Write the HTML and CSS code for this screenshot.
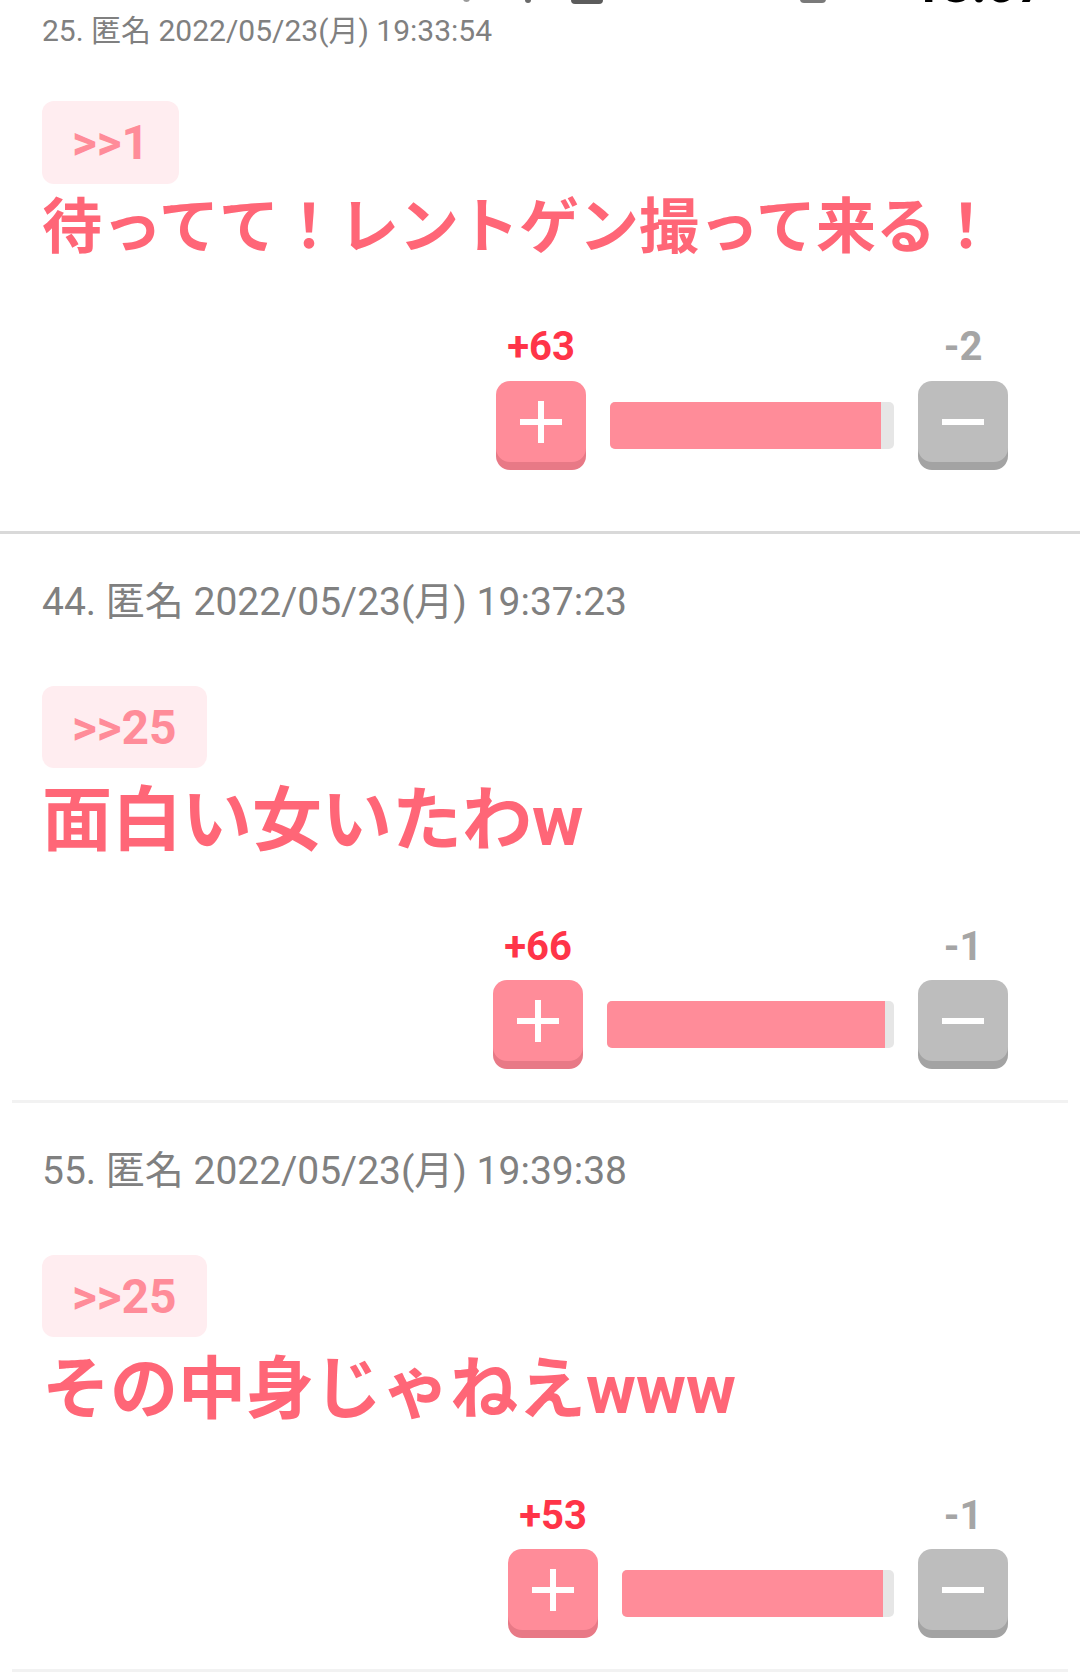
FILE: index.html
```html
<!DOCTYPE html>
<html lang="ja">

<head>
    <meta charset="UTF-8">
    <meta name="viewport" content="width=device-width, initial-scale=1.0">
    <title>レス一覧</title>
    <link rel="stylesheet" href="styles.css">
</head>

<body>
    <div class="statusbar">
        <span class="sb-mark sb-light"></span>
        <span class="sb-mark sb-small"></span>
        <span class="sb-mark sb-block"></span>
        <span class="sb-mark sb-mid"></span>
        <span class="sb-time">13:07</span>
    </div>

    <div class="post post-first">
        <div class="post-head">25. 匿名 2022/05/23(月) 19:33:54</div>
        <div class="anchor">&gt;&gt;1</div>
        <div class="post-body">待ってて！レントゲン撮って来る！</div>
        <div class="votes">
            <div class="vote-col">
                <div class="count count-plus">+63</div>
                <div class="vote-btn btn-plus">
                    <svg width="42" height="42" viewBox="0 0 42 42"><rect x="0" y="18" width="42" height="6" fill="#fff"/><rect x="18" y="0" width="6" height="42" fill="#fff"/></svg>
                </div>
            </div>
            <div class="bar" style="width: 284px;"><div class="bar-fill" style="width: 95.4%;"></div></div>
            <div class="vote-col">
                <div class="count count-minus">-2</div>
                <div class="vote-btn btn-minus">
                    <svg width="42" height="6" viewBox="0 0 42 6"><rect x="0" y="0" width="42" height="6" fill="#fff"/></svg>
                </div>
            </div>
        </div>
    </div>
    <div class="divider"></div>

    <div class="post">
        <div class="post-head">44. 匿名 2022/05/23(月) 19:37:23</div>
        <div class="anchor">&gt;&gt;25</div>
        <div class="post-body post-body-lg">面白い女いたわw</div>
        <div class="votes">
            <div class="vote-col">
                <div class="count count-plus">+66</div>
                <div class="vote-btn btn-plus">
                    <svg width="42" height="42" viewBox="0 0 42 42"><rect x="0" y="18" width="42" height="6" fill="#fff"/><rect x="18" y="0" width="6" height="42" fill="#fff"/></svg>
                </div>
            </div>
            <div class="bar" style="width: 287px;"><div class="bar-fill" style="width: 96.8%;"></div></div>
            <div class="vote-col">
                <div class="count count-minus">-1</div>
                <div class="vote-btn btn-minus">
                    <svg width="42" height="6" viewBox="0 0 42 6"><rect x="0" y="0" width="42" height="6" fill="#fff"/></svg>
                </div>
            </div>
        </div>
    </div>
    <div class="divider divider-light"></div>

    <div class="post">
        <div class="post-head">55. 匿名 2022/05/23(月) 19:39:38</div>
        <div class="anchor">&gt;&gt;25</div>
        <div class="post-body">その中身じゃねえwww</div>
        <div class="votes">
            <div class="vote-col">
                <div class="count count-plus">+53</div>
                <div class="vote-btn btn-plus">
                    <svg width="42" height="42" viewBox="0 0 42 42"><rect x="0" y="18" width="42" height="6" fill="#fff"/><rect x="18" y="0" width="6" height="42" fill="#fff"/></svg>
                </div>
            </div>
            <div class="bar" style="width: 272px;"><div class="bar-fill" style="width: 96.1%;"></div></div>
            <div class="vote-col">
                <div class="count count-minus">-1</div>
                <div class="vote-btn btn-minus">
                    <svg width="42" height="6" viewBox="0 0 42 6"><rect x="0" y="0" width="42" height="6" fill="#fff"/></svg>
                </div>
            </div>
        </div>
    </div>
    <div class="divider divider-light"></div>
</body>

</html>
```

FILE: styles.css
```css
body {
    margin: 0;
    background-color: #ffffff;
    font-family: Roboto, "Noto Sans CJK JP", sans-serif;
}

/* cut-off status bar at the very top */
.statusbar {
    display: flex;
    align-items: flex-end;
    height: 5px;
    overflow: hidden;
}

.sb-mark {
    display: block;
    flex: none;
    border-radius: 0 0 4px 4px;
}

.sb-light {
    width: 7px;
    height: 10px;
    margin-left: 463px;
    margin-bottom: 3px;
    background-color: #9a9a9a;
}

.sb-small {
    width: 6px;
    height: 10px;
    margin-left: 55px;
    margin-bottom: 2px;
    background-color: #6a6a6a;
}

.sb-block {
    width: 32px;
    height: 10px;
    margin-left: 40px;
    margin-bottom: 1px;
    background-color: #5c5c5c;
}

.sb-mid {
    width: 26px;
    height: 10px;
    margin-left: 197px;
    margin-bottom: 2px;
    background-color: #7a7a7a;
}

.sb-time {
    flex: none;
    margin-left: 86px;
    font-size: 52px;
    font-weight: bold;
    line-height: 1;
    color: #000000;
    margin-bottom: -6px;
}

.post {
    padding: 46px 0 31px 42px;
}

.post-head {
    font-size: 39px;
    line-height: 44px;
    color: #808080;
}

.anchor {
    display: inline-flex;
    align-items: center;
    height: 82px;
    margin-top: 62px;
    padding: 0 30px;
    border-radius: 12px;
    background-color: #ffedf0;
    color: #ff8c99;
    font-size: 48px;
    font-weight: bold;
}

.post-body {
    margin-top: 17px;
    font-family: Roboto, "Noto Sans CJK JP", sans-serif;
    font-size: 68px;
    line-height: 72px;
    font-weight: bold;
    color: #ff6677;
}

.post-body-lg {
    font-size: 70px;
}

.votes {
    display: flex;
    justify-content: flex-end;
    align-items: flex-end;
    gap: 24px;
    margin-top: 68px;
    padding-right: 72px;
}

.vote-col {
    display: flex;
    flex-direction: column;
    align-items: center;
    width: 90px;
}

.count {
    font-size: 40px;
    line-height: 44px;
    font-weight: bold;
    margin-bottom: 11px;
}

.count-plus {
    color: #ff3448;
}

.count-minus {
    color: #a5a5a5;
}

.vote-btn {
    display: flex;
    align-items: center;
    justify-content: center;
    width: 90px;
    height: 81px;
    margin-bottom: 8px;
    border-radius: 14px;
}

.btn-plus {
    background-color: #ff8c99;
    box-shadow: 0 8px 0 #e87986;
}

.btn-minus {
    background-color: #bdbdbd;
    box-shadow: 0 8px 0 #a3a3a3;
}

.bar {
    height: 47px;
    margin-bottom: 21px;
    border-radius: 5px;
    background-color: #e6e6e6;
    overflow: hidden;
}

.bar-fill {
    height: 100%;
    background-color: #ff8c99;
}

.divider {
    height: 3px;
    background-color: #d9d9d9;
}

.divider-light {
    margin: 0 12px;
    background-color: #f2f2f2;
}

/* the first post is drawn a little smaller */
.post-first {
    padding-top: 8px;
    padding-bottom: 61px;
}

.post-first .post-head {
    font-size: 30px;
    line-height: 36px;
}

.post-first .anchor {
    margin-top: 52px;
    height: 83px;
}

.post-first .post-body {
    margin-top: 11px;
    font-size: 60px;
    line-height: 66px;
}

.post-first .votes {
    margin-top: 64px;
}

.post-first .count {
    margin-bottom: 12px;
}
```
